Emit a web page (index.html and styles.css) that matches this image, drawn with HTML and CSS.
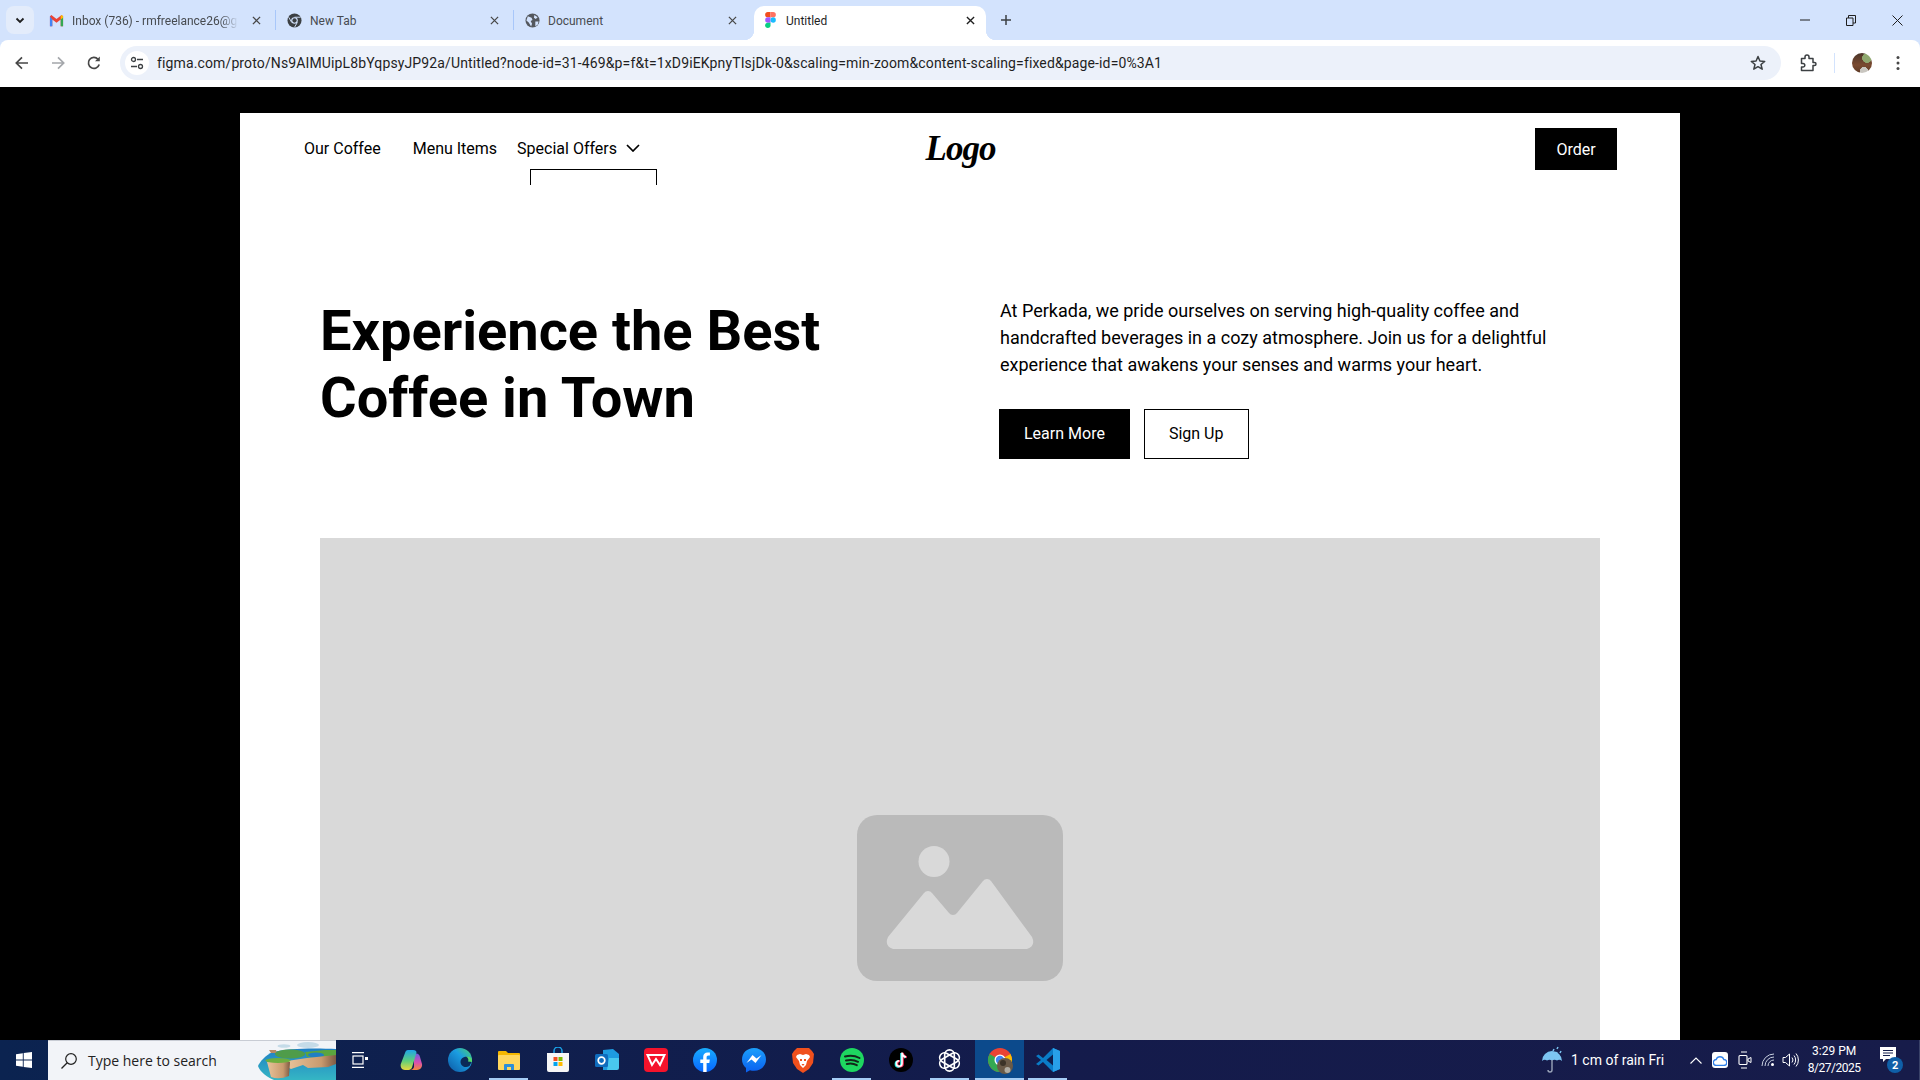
FILE: index.html
```html
<!DOCTYPE html>
<html lang="en">
<head>
<meta charset="utf-8">
<title>Untitled</title>
<link rel="stylesheet" href="styles.css">
</head>
<body>
<div class="screen">
  <header class="browser">
    <div class="tabstrip">
      <button class="tablist"><svg width="12" height="12" viewBox="0 0 12 12"><path d="M2.500 4.500 6 8l3.500-3.500" fill="none" stroke="#1f1f1f" stroke-width="1.800"/></svg></button>
      <div class="tab tab-first">
        <svg class="favicon" viewBox="0 0 16 16"><path d="M1 3.500V14h2.500V7L8 10.500 12.500 7v7H15V3.500L13.500 2 8 6.500 2.500 2z" fill="#ea4335"/><path d="M1 3.500V14h2.500V7z" fill="#4285f4"/><path d="M15 3.500V14h-2.500V7z" fill="#34a853"/><path d="M12.500 7 15 5V3.500L13.500 2l-1 .8z" fill="#fbbc04"/></svg>
        <span class="tab-title tab-fade">Inbox (736) - rmfreelance26@gmail.com</span>
        <svg class="tab-close" viewBox="0 0 10 10"><path d="M1 1l8 8M9 1 1 9" stroke="#474747" stroke-width="1.400"/></svg>
      </div>
      <div class="tab-sep"></div>
      <div class="tab">
        <svg class="favicon" viewBox="0 0 16 16"><circle cx="8" cy="8" r="7.500" fill="#3c4043"/><circle cx="8" cy="8" r="3.500" fill="#d3e3fd"/><circle cx="8" cy="8" r="2.300" fill="#3c4043"/><path d="M8 4.500h6.500M5 10 1.800 4.500M11 10l-3 5.300" stroke="#d3e3fd" stroke-width="1"/></svg>
        <span class="tab-title">New Tab</span>
        <svg class="tab-close" viewBox="0 0 10 10"><path d="M1 1l8 8M9 1 1 9" stroke="#474747" stroke-width="1.400"/></svg>
      </div>
      <div class="tab-sep"></div>
      <div class="tab">
        <svg class="favicon" viewBox="0 0 16 16"><circle cx="8" cy="8" r="7.500" fill="#54585e"/><path d="M3 3.500 7 5l1 2.500-2 1 1.500 3-1 3L4 10 1.500 8zM10 2l3.500 2.500-2 2-2-1.500zM11 9h3.500l-1 3.500L11 14z" fill="#d3e3fd"/></svg>
        <span class="tab-title">Document</span>
        <svg class="tab-close" viewBox="0 0 10 10"><path d="M1 1l8 8M9 1 1 9" stroke="#474747" stroke-width="1.400"/></svg>
      </div>
      <div class="tab tab-active">
        <svg class="favicon figma" viewBox="0 0 12 18"><path d="M3 0h3v6H3a3 3 0 0 1 0-6z" fill="#f24e1e"/><path d="M6 0h3a3 3 0 0 1 0 6H6z" fill="#ff7262"/><path d="M3 6h3v6H3a3 3 0 0 1 0-6z" fill="#a259ff"/><circle cx="9" cy="9" r="3" fill="#1abcfe"/><path d="M3 12h3v3a3 3 0 1 1-3-3z" fill="#0acf83"/></svg>
        <span class="tab-title title-dark">Untitled</span>
        <svg class="tab-close" viewBox="0 0 10 10"><path d="M1 1l8 8M9 1 1 9" stroke="#1f1f1f" stroke-width="1.500"/></svg>
      </div>
      <svg class="newtab" viewBox="0 0 12 12"><path d="M6 1v10M1 6h10" stroke="#3c4043" stroke-width="1.500"/></svg>
      <div class="winctl">
        <span class="winbtn"><svg width="10" height="10" viewBox="0 0 10 10"><path d="M0 5h10" stroke="#1f1f1f"/></svg></span>
        <span class="winbtn"><svg width="10" height="11" viewBox="0 0 10 11"><path d="M.5 3h6.500v7.500H.5zM2.500 3V.5h7V8H7" fill="none" stroke="#1f1f1f"/></svg></span>
        <span class="winbtn"><svg width="11" height="11" viewBox="0 0 11 11"><path d="M.5.5l10 10M10.500.5l-10 10" stroke="#1f1f1f"/></svg></span>
      </div>
    </div>
    <div class="toolbar">
      <span class="tool"><svg width="16" height="16" viewBox="0 0 16 16"><path d="M14 8H2.500M8 2.300 2.300 8 8 13.700" fill="none" stroke="#474747" stroke-width="1.700"/></svg></span>
      <span class="tool"><svg width="16" height="16" viewBox="0 0 16 16"><path d="M2 8h11.500M8 2.300 13.700 8 8 13.700" fill="none" stroke="#a4a7ab" stroke-width="1.700"/></svg></span>
      <span class="tool"><svg width="16" height="16" viewBox="0 0 16 16"><path d="M13.200 9.500A5.500 5.500 0 1 1 12 4.200" fill="none" stroke="#474747" stroke-width="1.700"/><path d="M13.800 1.500v4.800H9z" fill="#474747"/></svg></span>
      <div class="omnibox">
        <span class="site-chip"><svg width="14" height="14" viewBox="0 0 14 14"><circle cx="3.500" cy="3.500" r="2" fill="none" stroke="#3c4043" stroke-width="1.300"/><path d="M7 3.500h6M1 10.500h6" stroke="#3c4043" stroke-width="1.300"/><circle cx="10.500" cy="10.500" r="2" fill="none" stroke="#3c4043" stroke-width="1.300"/></svg></span>
        <span class="url">figma.com/proto/Ns9AIMUipL8bYqpsyJP92a/Untitled?node-id=31-469&amp;p=f&amp;t=1xD9iEKpnyTIsjDk-0&amp;scaling=min-zoom&amp;content-scaling=fixed&amp;page-id=0%3A1</span>
        <svg class="star" width="16" height="16" viewBox="0 0 16 16"><path d="M8 1.500 9.900 6l4.800.4-3.700 3.100 1.200 4.700L8 11.700l-4.200 2.500L5 9.500 1.300 6.400 6.100 6z" fill="none" stroke="#3c4043" stroke-width="1.500" stroke-linejoin="round"/></svg>
      </div>
      <div class="tool-right">
        <svg width="18" height="18" viewBox="0 0 18 18"><path d="M2.500 4.500H6V3a2 2 0 0 1 4 0v1.500h4v4h1.500a1.500 1.500 0 0 1 0 3H14v5H2.500v-3.500H4a1.800 1.800 0 0 0 0-3.600H2.500z" fill="none" stroke="#3c4043" stroke-width="1.500" stroke-linejoin="round"/></svg>
        <span class="tool-div"></span>
        <span class="avatar"></span>
        <svg width="4" height="16" viewBox="0 0 4 16"><circle cx="2" cy="2.500" r="1.500" fill="#474747"/><circle cx="2" cy="8" r="1.500" fill="#474747"/><circle cx="2" cy="13.500" r="1.500" fill="#474747"/></svg>
      </div>
    </div>
  </header>

  <main class="viewport">
    <div class="page">
      <nav class="nav">
        <div class="nav-links">
          <a class="nav-link link-coffee">Our Coffee</a>
          <a class="nav-link link-menu">Menu Items</a>
          <div class="nav-drop">
            <a class="nav-link">Special Offers</a>
            <svg class="chev" width="14" height="8" viewBox="0 0 14 8"><path d="M1 1l6 6 6-6" fill="none" stroke="#000" stroke-width="1.700"/></svg>
            <div class="dropbox"></div>
          </div>
        </div>
        <div class="logo">Logo</div>
        <div class="nav-end"><button class="btn btn-dark btn-order">Order</button></div>
      </nav>
      <section class="hero">
        <h1 class="title">Experience the Best Coffee in Town</h1>
        <div class="hero-side">
          <p class="lead">At Perkada, we pride ourselves on serving high-quality coffee and handcrafted beverages in a cozy atmosphere. Join us for a delightful experience that awakens your senses and warms your heart.</p>
          <div class="actions">
            <button class="btn btn-dark btn-hero">Learn More</button>
            <button class="btn btn-line btn-hero">Sign Up</button>
          </div>
        </div>
      </section>
      <div class="placeholder">
        <svg width="206" height="166" viewBox="0 0 206 166"><rect width="206" height="166" rx="20" fill="#bababa"/><circle cx="77" cy="46.500" r="15.500" fill="#d9d9d9"/><path d="M31 122 67 78a5 5 0 0 1 8 0l17 20a5 5 0 0 0 8 0l26-32a5 5 0 0 1 8 0l41 56q4 9-5 12H36q-9-3-5-12z" fill="#d9d9d9"/></svg>
      </div>
    </div>
  </main>

  <footer class="taskbar">
    <span class="start"><svg width="16" height="16" viewBox="0 0 16 16"><path d="M0 2.200 6.800 1.200V7.500H0zM7.700 1.100 16 0v7.500H7.700zM0 8.400h6.800v6.400L0 13.800zM7.700 8.400H16V16l-8.300-1.100z" fill="#fff"/></svg></span>
    <div class="search">
      <svg class="search-ic" width="18" height="18" viewBox="0 0 18 18"><circle cx="11" cy="7" r="5.300" fill="none" stroke="#222" stroke-width="1.200"/><path d="M7.200 10.800 1.500 16.500" stroke="#222" stroke-width="1.300"/></svg>
      <span class="search-text">Type here to search</span>
      <svg class="island" width="79" height="40" viewBox="0 0 79 40">
        <defs>
          <linearGradient id="sea" x1="0" y1="0" x2="0" y2="1"><stop offset="0" stop-color="#1f7fc4"/><stop offset="1" stop-color="#35b6c4"/></linearGradient>
          <linearGradient id="cliff" x1="0" y1="0" x2="1" y2="0"><stop offset="0" stop-color="#e8c39a"/><stop offset=".7" stop-color="#c99a6e"/><stop offset="1" stop-color="#7d5a44"/></linearGradient>
        </defs>
        <path d="M79 9C60 8 30 8 16 12 8 15 3 22 1 26c2 6 10 12 16 14h62z" fill="url(#sea)"/>
        <ellipse cx="27" cy="6" rx="6.500" ry="1.800" fill="#c5dbe8"/>
        <ellipse cx="51" cy="5" rx="11" ry="3" fill="#c5dbe8"/>
        <path d="M12 10h7l1 3h-6z" fill="#b98a63"/>
        <ellipse cx="33" cy="14" rx="15" ry="4.500" fill="#4f9c4a"/>
        <path d="M48 12l20-2 11 0v6l-15 2-14-1z" fill="#5aa53f"/>
        <ellipse cx="59" cy="15" rx="8" ry="2.500" fill="#1f7fc4"/>
        <path d="M30 21l20-3 29-3v9l-8 3-20 1-5-3-12 4-4-2z" fill="url(#cliff)"/>
        <path d="M10 22h23l-1 14q-10 4-18 1z" fill="url(#cliff)"/>
        <ellipse cx="21" cy="20.500" rx="12.500" ry="2.600" fill="#6dae3f"/>
      </svg>
    </div>
    <div class="tb-icons">
      <span class="tb-slot"><svg class="shift-left" width="16" height="16" viewBox="0 0 16 16"><path d="M0 .7h12M0 15.300h12" stroke="#fff" stroke-width="1.200"/><rect x="1" y="4" width="10" height="8" fill="none" stroke="#fff" stroke-width="1.200"/><rect x="13" y="5" width="3" height="3" fill="#fff"/></svg></span>
      <span class="tb-slot"><svg width="24" height="24" viewBox="0 0 24 24"><defs><linearGradient id="cpa" x1="0" y1="0" x2="0" y2="1"><stop offset="0" stop-color="#1fa5e8"/><stop offset=".55" stop-color="#5fcf7a"/><stop offset="1" stop-color="#e8d93f"/></linearGradient><linearGradient id="cpb" x1="0" y1="0" x2="0" y2="1"><stop offset="0" stop-color="#6a5fe0"/><stop offset=".55" stop-color="#d94fb0"/><stop offset="1" stop-color="#f58a3a"/></linearGradient></defs><path d="M15 6c3-1.500 5.500 0 6 3l2 7c.7 3-2 6-5 6h-7c2 0 3.500-1 4-3z" fill="url(#cpb)"/><path d="M9 2h5c2.500 0 3.500 1 3.500 2.500L13 19.500c-.5 1.500-2 2.500-3.500 2.500H6c-3 0-5-3-4.200-6L6 5c.5-2 1.500-3 3-3z" fill="url(#cpa)"/></svg></span>
      <span class="tb-slot"><svg width="24" height="24" viewBox="0 0 24 24"><defs><linearGradient id="ed" x1="0" y1="1" x2="1" y2="0"><stop offset="0" stop-color="#0c59a4"/><stop offset=".6" stop-color="#1b9de2"/><stop offset="1" stop-color="#4fd16a"/></linearGradient></defs><circle cx="12" cy="12" r="12" fill="url(#ed)"/><path d="M23.500 14c0-4-4-6-7-5-4 1-5 5-3 8 1.500 2 5 3 8 1" fill="#0b2a58"/><path d="M24 12c0-2.500-3-4-6-3.500 2 1 3 3 2 5l4 .5z" fill="#56d86e"/></svg></span>
      <span class="tb-slot tb-on"><svg width="24" height="22" viewBox="0 0 24 22"><path d="M1 3a1 1 0 0 1 1-1h7l2 2h11a1 1 0 0 1 1 1v3H1z" fill="#f5b700"/><rect x="1" y="6" width="22" height="15" rx="1" fill="#ffd75e"/><path d="M7 21v-5a1 1 0 0 1 1-1h8a1 1 0 0 1 1 1v5h-3v-3h-4v3z" fill="#2e8fd8"/></svg></span>
      <span class="tb-slot"><svg width="24" height="26" viewBox="0 0 24 26"><path d="M8 6V4a4 4 0 0 1 8 0v2" fill="none" stroke="#1ba3e8" stroke-width="1.500"/><path d="M1 6h22v17a2 2 0 0 1-2 2H3a2 2 0 0 1-2-2z" fill="#f6f6f6"/><rect x="7.500" y="10" width="4" height="4" fill="#f25022"/><rect x="12.500" y="10" width="4" height="4" fill="#7fba00"/><rect x="7.500" y="15" width="4" height="4" fill="#00a4ef"/><rect x="12.500" y="15" width="4" height="4" fill="#ffb900"/></svg></span>
      <span class="tb-slot"><svg width="24" height="24" viewBox="0 0 24 24"><path d="M8 2l10-1 6 5v12l-8 4H8z" fill="#1e9be0"/><path d="M14 10h10v10a2 2 0 0 1-2 2H12z" fill="#49c8ee"/><rect y="6" width="13" height="13" rx="1.500" fill="#0f6cbd"/><circle cx="6.500" cy="12.500" r="3.300" fill="none" stroke="#fff" stroke-width="1.700"/></svg></span>
      <span class="tb-slot"><svg width="24" height="24" viewBox="0 0 24 24"><rect width="24" height="24" rx="4" fill="#f5132b"/><path d="M3.500 7h17l-4.500 10-4-6-4 6z" fill="none" stroke="#fff" stroke-width="2"/></svg></span>
      <span class="tb-slot"><svg width="24" height="24" viewBox="0 0 24 24"><defs><linearGradient id="fb" x1="0" y1="0" x2="0" y2="1"><stop offset="0" stop-color="#18acfe"/><stop offset="1" stop-color="#0866ff"/></linearGradient></defs><circle cx="12" cy="12" r="12" fill="url(#fb)"/><path d="M10.200 24v-9H7.300v-3.500h2.900V9c0-3 1.700-4.600 4.400-4.600 1.200 0 2.300.2 2.300.2v3h-1.400c-1.500 0-1.900.9-1.900 1.800v2.100h3.200l-.5 3.500h-2.700v9z" fill="#fff"/></svg></span>
      <span class="tb-slot"><svg width="24" height="25" viewBox="0 0 24 25"><defs><linearGradient id="ms" x1="0" y1="0" x2="0" y2="1"><stop offset="0" stop-color="#1b9ffb"/><stop offset="1" stop-color="#0a5ff0"/></linearGradient></defs><path d="M12 0C5 0 0 5 0 11.500c0 3.500 1.500 6.500 4 8.500v4.500l4-2.300c1.300.4 2.600.6 4 .6 7 0 12-5 12-11.300S19 0 12 0z" fill="url(#ms)"/><path d="m4.500 15 6-8 4 3.500L19.500 7l-6 8-4-3.500z" fill="#fff"/></svg></span>
      <span class="tb-slot"><svg width="22" height="26" viewBox="0 0 22 26"><path d="M5 1h12l3 3 2 3-1 9-4 6-6 4-6-4-4-6L0 7l2-3z" fill="#f0501d"/><path d="M5 8l3-1 3 1 3-1 3 1 1 2-3 4-1 4-3 3-3-3-1-4-3-4z" fill="#fff"/><path d="M8 12h2v2H8zM12 12h2v2h-2zM9.500 17h3l-1.500 2z" fill="#f0501d"/></svg></span>
      <span class="tb-slot tb-on"><svg width="24" height="24" viewBox="0 0 24 24"><circle cx="12" cy="12" r="12" fill="#1ed760"/><path d="M5 8.500c5-1.500 10-1 14.500 1.500M6 12.500c4-1 8.500-.7 12 1.300M6.800 16c3.500-.8 7-.5 10 1.200" fill="none" stroke="#12261a" stroke-width="2" stroke-linecap="round"/></svg></span>
      <span class="tb-slot"><svg width="24" height="24" viewBox="0 0 24 24"><circle cx="12" cy="12" r="12" fill="#000"/><path d="M13 4.500v11a2.800 2.800 0 1 1-2.800-2.800M13 5c.4 2.300 1.800 3.700 4 4" fill="none" stroke="#25f4ee" stroke-width="2" transform="translate(-.8 .6)"/><path d="M13 4.500v11a2.800 2.800 0 1 1-2.800-2.800M13 5c.4 2.300 1.800 3.700 4 4" fill="none" stroke="#fe2c55" stroke-width="2" transform="translate(.8 .2)"/><path d="M13 4.500v11a2.800 2.800 0 1 1-2.800-2.800M13 5c.4 2.300 1.800 3.700 4 4" fill="none" stroke="#fff" stroke-width="1.600"/></svg></span>
      <span class="tb-slot tb-on"><svg width="25" height="25" viewBox="0 0 26 26"><g fill="none" stroke="#fff" stroke-width="1.700"><rect x="8" y="2" width="10" height="22" rx="5"/><rect x="8" y="2" width="10" height="22" rx="5" transform="rotate(60 13 13)"/><rect x="8" y="2" width="10" height="22" rx="5" transform="rotate(120 13 13)"/></g></svg></span>
      <span class="tb-slot tb-on tb-chrome"><svg class="chrome-ic" width="24" height="24" viewBox="0 0 24 24"><circle cx="12" cy="12" r="12" fill="#ea4335"/><path d="M12 12 22.400 6A12 12 0 0 1 12 24z" fill="#fbbc04"/><path d="M12 12 12 24A12 12 0 0 1 1.600 6z" fill="#34a853"/><circle cx="12" cy="12" r="5.500" fill="#fff"/><circle cx="12" cy="12" r="4.200" fill="#4285f4"/><circle cx="17" cy="18" r="8" fill="#6a5a48"/><circle cx="19.500" cy="22" r="3" fill="#b0aca2"/><circle cx="15" cy="15" r="3" fill="#3c3328"/></svg></span>
      <span class="tb-slot tb-on"><svg width="24" height="24" viewBox="0 0 24 24"><path d="M17 0 7 10 2.500 6.500 0 8l5 4-5 4 2.500 1.500L7 14l10 10 7-3V3z" fill="#0a7cc7"/><path d="M17 0v24l7-3V3z" fill="#28a0e8"/><path d="M17 6.500 10.500 12l6.500 5.500z" fill="#0e1e4d"/></svg></span>
    </div>
    <div class="tray">
      <svg class="umbrella" width="24" height="28" viewBox="0 0 24 28"><path d="M1 15a10 10 0 0 1 20 0q-2.500-2-5-.5-2.500-1.500-5 0-2.500-1.500-5 0-2.500-1.500-5 .5z" fill="#7cc4f2"/><path d="M11 14v10a2 2 0 0 1-4 0" fill="none" stroke="#9aa4b8" stroke-width="1.400"/><path d="M13 3l-1 2M17 1l-1 2M20 5l-1 2M16 6l-.6 1.500" stroke="#7cc4f2" stroke-width="1.500"/></svg>
      <span class="weather">1 cm of rain Fri</span>
      <svg class="caret" width="12" height="7" viewBox="0 0 12 7"><path d="M.5 6.500 6 1l5.500 5.500" fill="none" stroke="#fff" stroke-width="1.100"/></svg>
      <span class="cloudchip"><svg width="14" height="11" viewBox="0 0 14 11"><path d="M3.500 10.500a3 3 0 0 1-.3-6 4 4 0 0 1 7.600 0 3 3 0 0 1 0 6z" fill="none" stroke="#2f7fe8" stroke-width="1.300"/></svg></span>
      <svg class="tray-ic" width="14" height="18" viewBox="0 0 14 18"><path d="M3 1h6M3 17h6" stroke="#fff"/><rect x="1" y="4.500" width="8" height="9" rx="1" fill="none" stroke="#fff" stroke-width="1.100"/><path d="M10 8l3-1.500v5L10 10z" fill="none" stroke="#fff"/></svg>
      <svg class="tray-ic wifi" width="14" height="14" viewBox="0 0 14 14"><path d="M1 13A12 12 0 0 1 13 1M4 13a9 9 0 0 1 9-9M7 13a6 6 0 0 1 6-6" fill="none" stroke="#c8d0e0" stroke-width="1"/><circle cx="11.500" cy="11.500" r="1.500" fill="#fff"/></svg>
      <svg class="tray-ic vol" width="17" height="16" viewBox="0 0 17 16"><path d="M1 5.500h2.500L7.500 2v12l-4-3.500H1z" fill="none" stroke="#fff"/><path d="M10 5.500a4 4 0 0 1 0 5M12 3.500a7 7 0 0 1 0 9M14 1.500a10 10 0 0 1 0 13" fill="none" stroke="#fff"/></svg>
      <div class="clock"><span>3:29 PM</span><span class="date">8/27/2025</span></div>
      <span class="notify">
        <svg width="16" height="16" viewBox="0 0 16 16"><path d="M0 0h16v12H6l-3 3v-3H0z" fill="#fff"/><path d="M3 3.500h10M3 6h10M3 8.500h7" stroke="#16204e"/></svg>
        <span class="badge">2</span>
      </span>
    </div>
  </footer>
</div>
</body>
</html>
```

FILE: styles.css
```css
* { box-sizing: border-box; }
html, body { margin: 0; height: 100%; overflow: hidden; }
body { font-family: Roboto, "Liberation Sans", sans-serif; color: #000; }
button { font: inherit; border: 0; padding: 0; background: none; }
.screen { width: 1920px; height: 1080px; display: flex; flex-direction: column; background: #000; }

/* browser chrome */
.browser { flex: none; background: #d3e3fd; }
.tabstrip { height: 40px; background: #d3e3fd; display: flex; align-items: flex-end; padding-left: 6px; position: relative; }
.tablist { width: 28px; height: 28px; margin: 0 2px 6px 0; border-radius: 8px; background: #e3ecfb; display: flex; align-items: center; justify-content: center; }
.tab { width: 237px; height: 34px; display: flex; align-items: center; padding: 0 10px 6px 13px; gap: 8px; position: relative; font-size: 12px; }
.tab-first { width: 239px; }
.tab-sep + .tab { padding-left: 11px; }
.favicon { width: 15px; height: 15px; flex: none; }
.favicon.figma { height: 16px; width: 11px; margin: 0 2px; }
.tab-title { flex: 1; min-width: 0; white-space: nowrap; overflow: hidden; color: #474b50; margin-top: 2px; }
.tab-fade { -webkit-mask-image: linear-gradient(90deg, #000 90%, transparent); mask-image: linear-gradient(90deg, #000 90%, transparent); }
.title-dark { color: #1f1f1f; }
.tab-close { width: 9px; height: 9px; flex: none; margin: 0 4px 0 6px; }
.tab-sep { width: 1px; height: 20px; background: #a8c7fa; margin-bottom: 10px; flex: none; }
.tab-active { width: 232px; margin-left: 3px; background: #fff; border-radius: 10px 10px 0 0; padding: 0 7px 6px 9px; }
.tab-active::before, .tab-active::after { content: ""; position: absolute; bottom: 0; width: 10px; height: 10px; }
.tab-active::before { left: -10px; background: radial-gradient(circle at 0 0, transparent 10px, #fff 10.500px); }
.tab-active::after { right: -10px; background: radial-gradient(circle at 100% 0, transparent 10px, #fff 10.500px); }
.newtab { width: 12px; height: 12px; flex: none; margin: 0 0 14px 14px; }
.winctl { margin-left: auto; display: flex; height: 40px; }
.winbtn { width: 46px; height: 40px; display: flex; align-items: center; justify-content: center; }
.toolbar { height: 47px; background: #fff; border-radius: 8px 8px 0 0; display: flex; align-items: center; padding: 0 0 1px 4px; }
.tool { width: 36px; height: 36px; display: flex; align-items: center; justify-content: center; flex: none; }
.omnibox { flex: 1; height: 34px; margin-left: 8px; background: #ecf1fa; border-radius: 17px; display: flex; align-items: center; padding-left: 5px; padding-right: 15px; }
.site-chip { width: 24px; height: 24px; border-radius: 50%; background: #fff; display: flex; align-items: center; justify-content: center; flex: none; }
.url { margin-left: 8px; flex: 1; font-size: 14px; letter-spacing: .13px; color: #1f1f1f; white-space: nowrap; overflow: hidden; }
.star { flex: none; }
.tool-right { width: 139px; flex: none; display: flex; align-items: center; padding-left: 18px; }
.tool-div { width: 1px; height: 20px; background: #d3e3fd; margin: 0 17px; }
.avatar { width: 20px; height: 20px; border-radius: 50%; background: radial-gradient(circle at 75% 25%, #8fa86f 0 22%, transparent 24%), radial-gradient(circle at 60% 90%, #c9c6c0 0 18%, transparent 20%), linear-gradient(#4a3428, #7a4a30 60%, #5c3a26); margin-right: 24px; }

/* page in viewport */
.viewport { flex: 1; min-height: 0; overflow: hidden; background: #000; padding-top: 26px; }
.page { width: 1440px; margin: 0 auto; background: #fff; }
.nav { height: 72px; padding: 15px 63px 15px 64px; display: grid; grid-template-columns: 1fr auto 1fr; align-items: center; }
.nav-links { display: flex; align-items: center; font-size: 16px; padding-bottom: 2px; }
.nav-link { color: #000; white-space: nowrap; }
.link-coffee { margin-right: 32px; }
.link-menu { margin-right: 20px; }
.nav-drop { display: flex; align-items: center; gap: 9px; position: relative; }
.dropbox { position: absolute; left: 13px; top: 30px; width: 127px; height: 16px; border: 1px solid #000; border-bottom: 0; }
.logo { font-family: "Liberation Serif", serif; font-style: italic; font-weight: 700; font-size: 35px; line-height: 42px; letter-spacing: -1px; }
.nav-end { display: flex; justify-content: flex-end; }
.btn { font-size: 16px; display: flex; align-items: center; justify-content: center; }
.btn-dark { background: #000; color: #fff; }
.btn-line { background: #fff; color: #000; border: 1px solid #000; padding: 0 25px 0 24px; }
.btn-order { height: 42px; width: 82px; }
.hero { display: grid; grid-template-columns: 600px 600px; column-gap: 80px; padding: 112px 80px 79px; }
.title { margin: 1px 0 0; font-size: 56px; line-height: 67px; font-weight: 700; }
.lead { margin: 0; font-size: 18px; line-height: 27px; }
.actions { display: flex; gap: 14px; margin-top: 31px; margin-left: -1px; }
.btn-hero { height: 50px; padding-bottom: 2px; }
.btn-dark.btn-hero { padding-left: 25px; padding-right: 25px; }
.placeholder { width: 1280px; height: 720px; margin: 0 auto; background: #d9d9d9; display: flex; align-items: center; justify-content: center; }

/* taskbar */
.taskbar { flex: none; height: 40px; background: linear-gradient(90deg, #0b2350, #141b4b 55%, #171c4a); display: flex; align-items: stretch; color: #fff; border-right: 1px solid #3a4268; }
.start { width: 48px; display: flex; align-items: center; justify-content: center; }
.search { width: 288px; background: #f2f4f8; display: flex; align-items: center; padding-left: 12px; position: relative; overflow: hidden; border-top: 1px solid #c8ccd4; }
.search-text { margin-left: 10px; font-family: "Open Sans", sans-serif; font-size: 14px; color: #222; white-space: nowrap; }
.search-ic { flex: none; }
.island { position: absolute; right: 0; top: -1px; }
.tb-icons { display: flex; padding-left: 1px; }
.tb-slot { width: 49px; display: flex; align-items: center; justify-content: center; position: relative; }
.shift-left { margin-right: 3px; }
.tb-on::after { content: ""; position: absolute; left: 5px; right: 5px; bottom: 0; height: 2px; background: #a6cdf5; }
.tb-chrome { background: #0c4a8c; margin-left: 1px; margin-right: -1px; }
.tb-chrome::after { left: 0; right: 0; }
.chrome-ic { overflow: visible; margin-left: 1px; }
.tray { flex: 1; display: flex; align-items: center; padding-left: 469px; position: relative; }
.umbrella { flex: none; }
.weather { margin-left: 6px; font-size: 14px; white-space: nowrap; }
.caret { margin-left: 26px; flex: none; }
.cloudchip { width: 16px; height: 16px; margin-left: 10px; background: #fff; border-radius: 3px; display: flex; align-items: center; justify-content: center; flex: none; }
.tray-ic { flex: none; margin-left: 10px; }
.wifi { margin-left: 9px; }
.vol { margin-left: 7px; }
.clock { width: 60px; margin-left: 5px; display: flex; flex-direction: column; align-items: center; font-size: 12px; line-height: 17px; flex: none; }
.date { letter-spacing: -.5px; }
.notify { margin-left: 16px; width: 26px; height: 30px; position: relative; flex: none; padding-top: 2px; }
.badge { position: absolute; left: 7px; top: 12px; width: 16px; height: 16px; border-radius: 50%; background: #0f5fa8; color: #fff; font-size: 11px; font-weight: 700; display: flex; align-items: center; justify-content: center; }
```
